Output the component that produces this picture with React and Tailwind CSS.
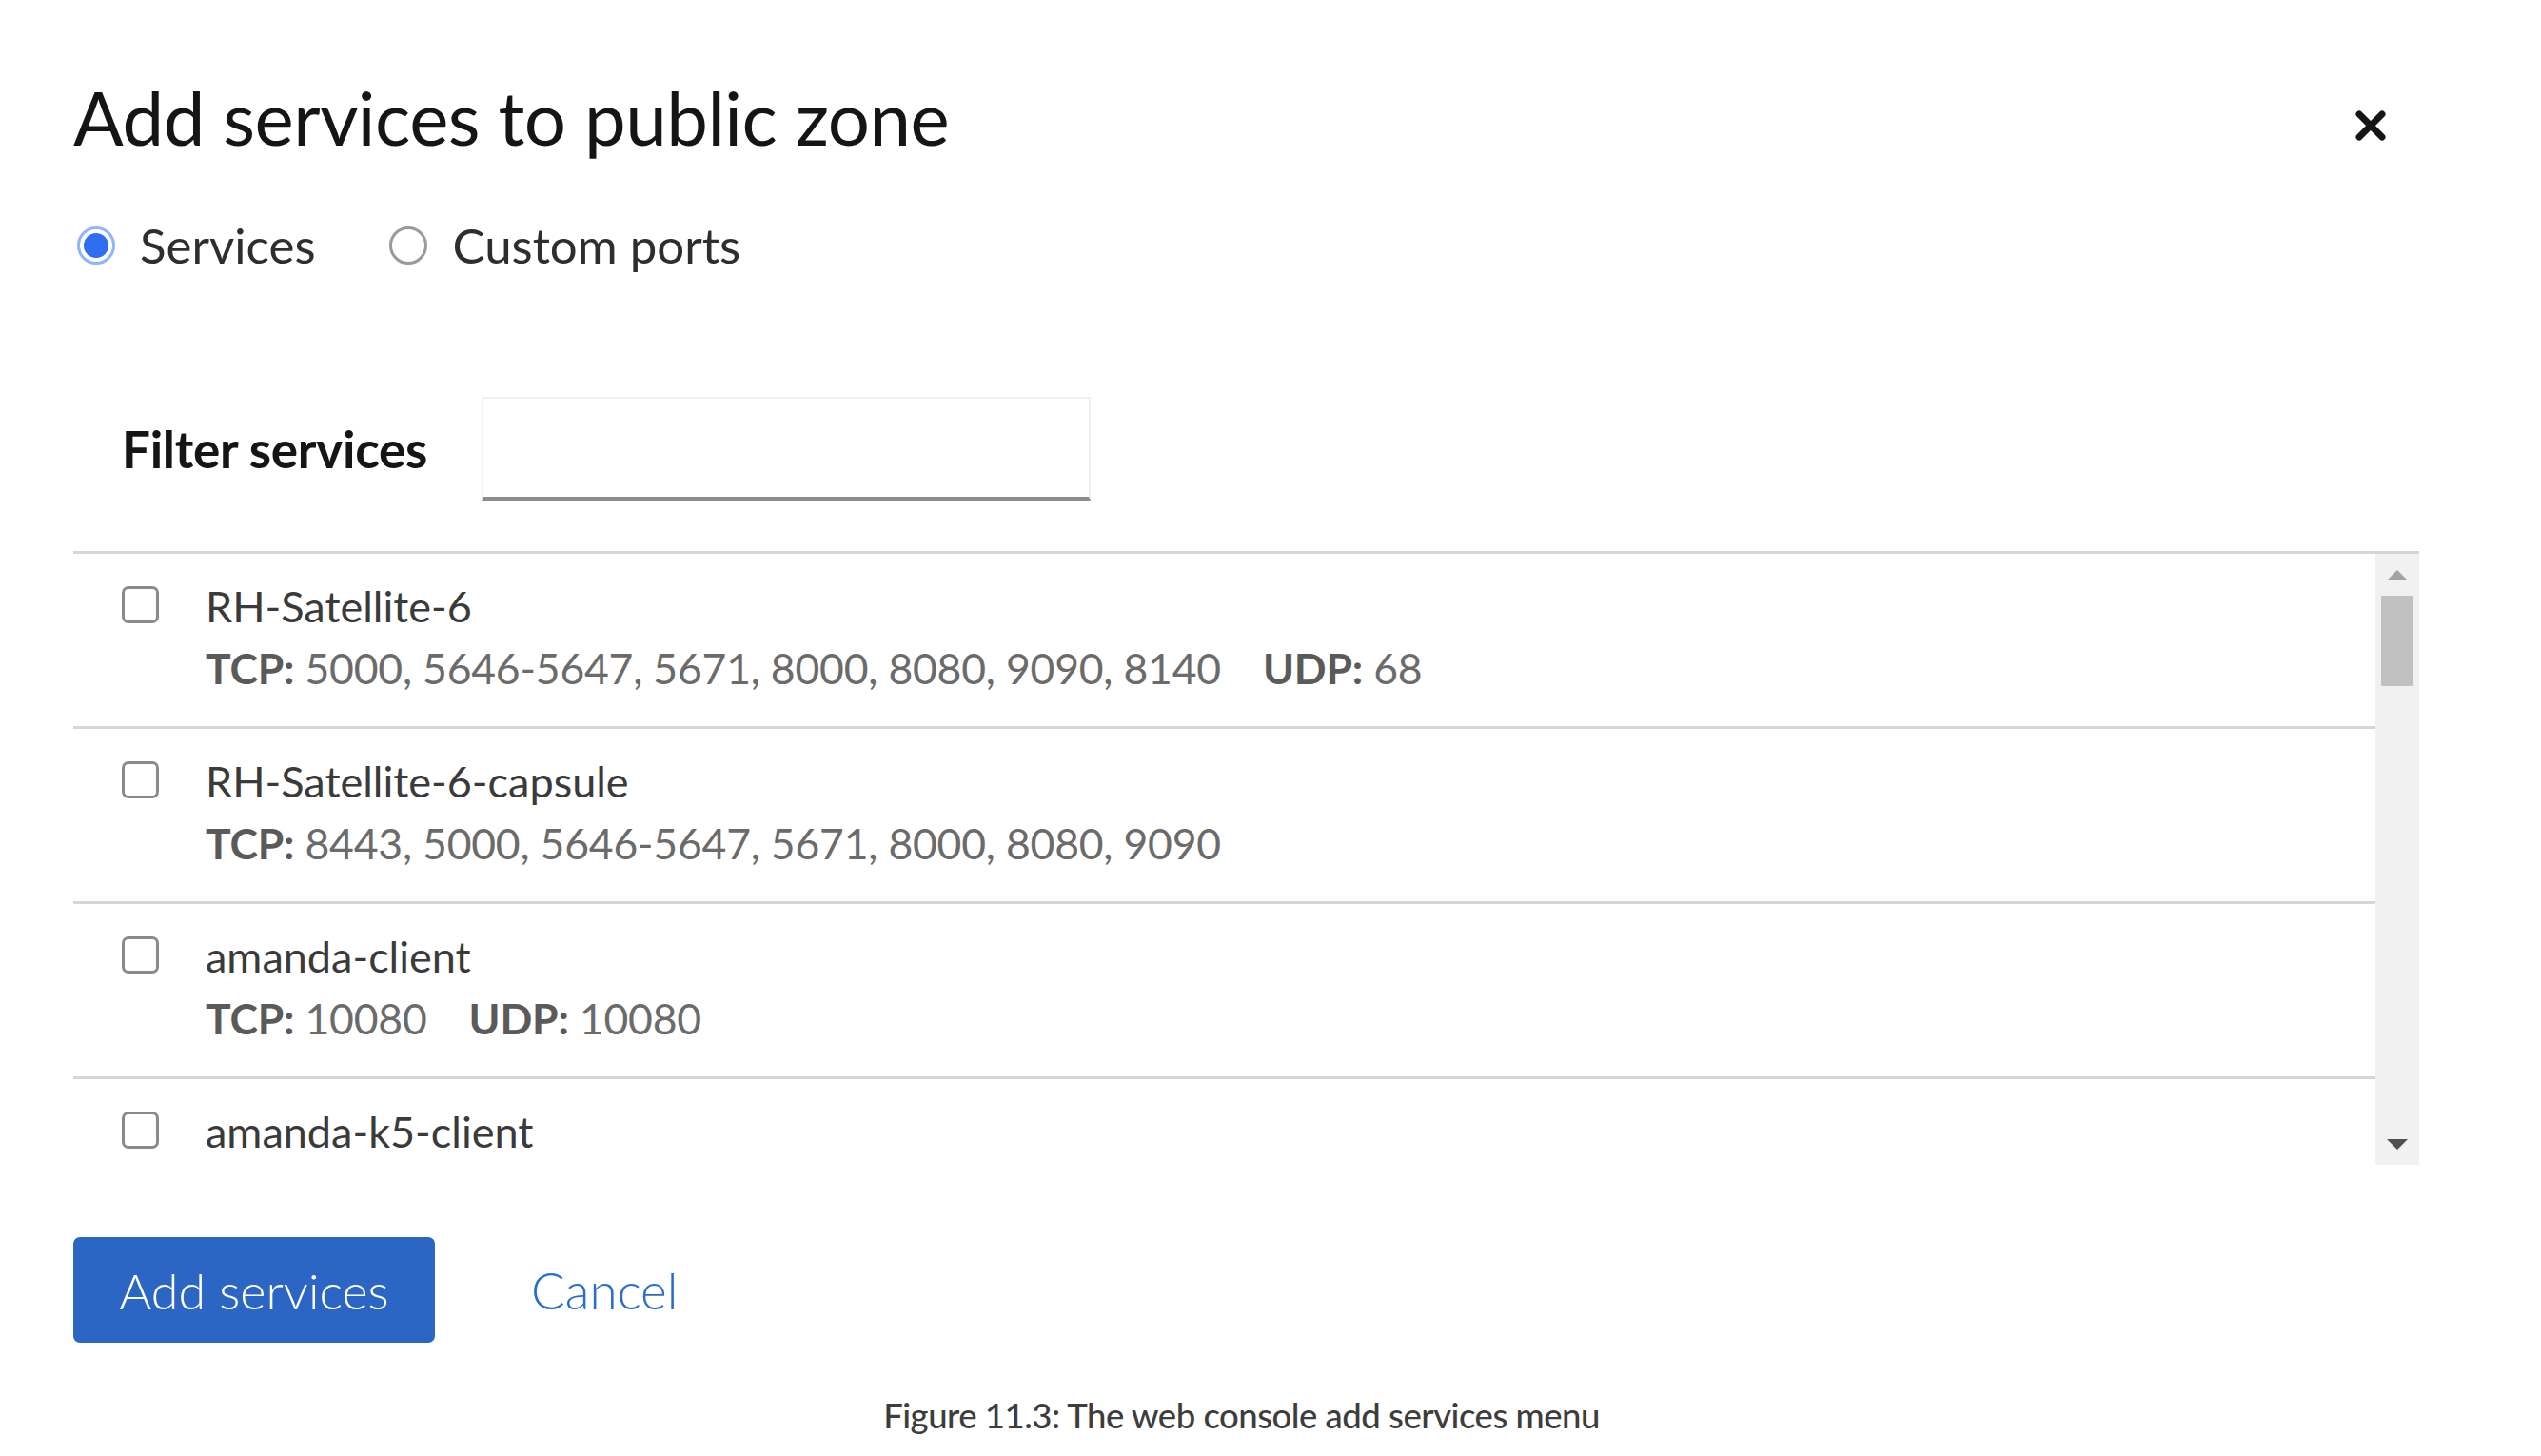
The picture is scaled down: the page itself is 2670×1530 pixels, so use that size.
import { useState } from "react";

const services = [
    { name: "RH-Satellite-6", tcp: "5000, 5646-5647, 5671, 8000, 8080, 9090, 8140", udp: "68" },
    { name: "RH-Satellite-6-capsule", tcp: "8443, 5000, 5646-5647, 5671, 8000, 8080, 9090" },
    { name: "amanda-client", tcp: "10080", udp: "10080" },
    { name: "amanda-k5-client" },
];

const Radio = ({ checked, label, onClick }) => (
    <button type="button" onClick={onClick} className="flex items-center gap-[26px] cursor-pointer">
        {checked ? (
            <span className="w-[40px] h-[40px] rounded-full border-[3px] border-[#8fb5ff] bg-white flex items-center justify-center">
                <span className="w-[26px] h-[26px] rounded-full bg-[#2f6df2]" />
            </span>
        ) : (
            <span className="w-[40px] h-[40px] rounded-full border-[3px] border-[#9a9a9a] bg-white" />
        )}
        <span className="text-[51px] leading-[60px] text-[#2e2e2e]">{label}</span>
    </button>
);

const ServiceRow = ({ service }) => {
    const [checked, setChecked] = useState(false);

    return (
        <div className="h-[184px] shrink-0 border-b-[3px] border-[#d6d6d6] flex items-start pl-[51px] pt-[27px]">
            <button
                type="button"
                onClick={() => setChecked((cur) => !cur)}
                className="mt-[7px] w-[39px] h-[39px] rounded-[7px] border-[3px] border-[#8a8a8a] bg-white shrink-0"
            >
                {checked && <span className="block w-full h-full rounded-[3px] bg-[#2f6df2]" />}
            </button>
            <div className="ml-[49px] flex flex-col">
                <span className="text-[45px] leading-[56px] text-[#3a3a3a]">{service.name}</span>
                {(service.tcp || service.udp) && (
                    <div className="mt-[9px] text-[44.5px] leading-[56px] text-[#6b6b6b] flex gap-[44px] tracking-[-0.2px]">
                        {service.tcp && (
                            <span>
                                <span className="font-bold text-[#5a5a5a]">TCP:</span> {service.tcp}
                            </span>
                        )}
                        {service.udp && (
                            <span>
                                <span className="font-bold text-[#5a5a5a]">UDP:</span> {service.udp}
                            </span>
                        )}
                    </div>
                )}
            </div>
        </div>
    );
};

export default function App() {
    const [mode, setMode] = useState("services");
    const [filter, setFilter] = useState("");

    return (
        <div className="w-[2670px] h-[1530px] bg-white font-['Lato',sans-serif] pl-[77px] pr-[128px] pt-[76px]">
            <div className="flex justify-between items-start">
                <h1 className="text-[78px] leading-[94px] text-[#151515] tracking-[-0.5px]">Add services to public zone</h1>
                <button type="button" className="mt-[38px] mr-[33px]">
                    <svg width="36" height="36" viewBox="0 0 36 36">
                        <path d="M6 6 L30 30 M30 6 L6 30" stroke="#151515" strokeWidth="7" strokeLinecap="round" />
                    </svg>
                </button>
            </div>

            <div className="mt-[58px] h-[60px] flex items-center gap-[78px] pl-[4px]">
                <Radio checked={mode === "services"} label="Services" onClick={() => setMode("services")} />
                <Radio checked={mode === "ports"} label="Custom ports" onClick={() => setMode("ports")} />
            </div>

            <div className="mt-[129px] h-[109px] flex items-center">
                <label className="ml-[51px] w-[378px] text-[53px] font-bold text-[#151515] tracking-[-0.3px]">Filter services</label>
                <input
                    value={filter}
                    onChange={(e) => setFilter(e.target.value)}
                    className="w-[640px] h-[109px] border-[2px] border-[#f0f0f0] border-b-[4px] border-b-[#8a8d90] outline-none px-4 text-[40px]"
                />
            </div>

            <div className="mt-[53px] h-[645px] border-t-[3px] border-[#d6d6d6] flex overflow-hidden">
                <div className="flex-1 flex flex-col overflow-hidden">
                    {services.map((s) => (
                        <ServiceRow key={s.name} service={s} />
                    ))}
                </div>
                <div className="w-[46px] bg-[#f1f1f1] flex flex-col items-center">
                    <svg className="mt-[17px]" width="22" height="11" viewBox="0 0 22 11">
                        <path d="M11 0 L22 11 L0 11 Z" fill="#a3a3a3" />
                    </svg>
                    <div className="mt-[16px] w-[34px] h-[95px] bg-[#c1c1c1]" />
                    <svg className="mt-auto mb-[16px]" width="22" height="11" viewBox="0 0 22 11">
                        <path d="M0 0 L22 0 L11 11 Z" fill="#505050" />
                    </svg>
                </div>
            </div>

            <div className="mt-[76px] flex items-center">
                <button type="button" className="w-[380px] h-[111px] rounded-[7px] bg-[#2b66c4] text-white text-[52px] font-light">
                    Add services
                </button>
                <button type="button" className="ml-[101px] text-[53px] text-[#2b6dcc] font-light">
                    Cancel
                </button>
            </div>

            <p className="mt-[51px] pr-[10px] text-center text-[36.5px] leading-[50px] text-[#3d3d3d] font-medium tracking-[-0.5px]">
                Figure 11.3: The web console add services menu
            </p>
        </div>
    );
}
